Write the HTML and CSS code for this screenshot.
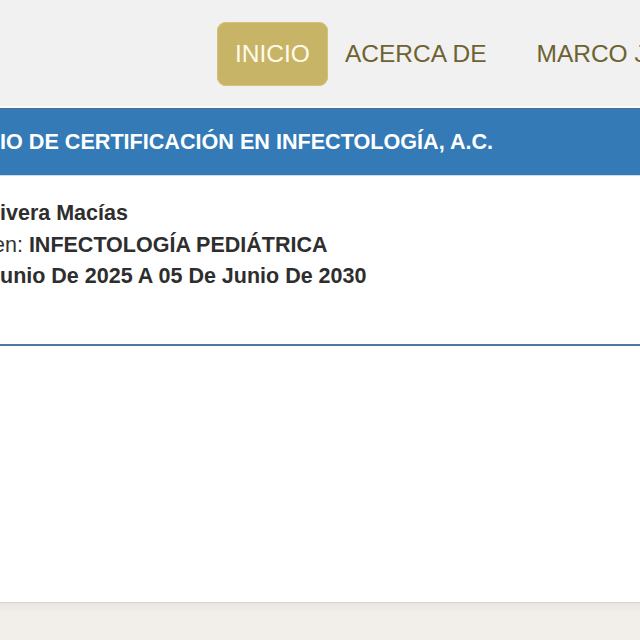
FILE: index.html
```html
<!DOCTYPE html>
<html lang="es">
<head>
<meta charset="utf-8">
<title>Consejo</title>
<link rel="stylesheet" href="styles.css">
</head>
<body>
<header class="topbar">
  <nav class="nav">
    <a class="nav-item active" href="#">INICIO</a>
    <a class="nav-item" href="#">ACERCA DE</a>
    <a class="nav-item next" href="#">MARCO J</a>
  </nav>
</header>
<main class="main">
  <section class="panel">
    <div class="panel-heading">IO DE CERTIFICACIÓN EN INFECTOLOGÍA, A.C.</div>
    <div class="panel-body">
      <p class="line"><strong>ivera Macías</strong></p>
      <p class="line shifted">en: <strong>INFECTOLOGÍA PEDIÁTRICA</strong></p>
      <p class="line"><strong>unio De 2025 A 05 De Junio De 2030</strong></p>
    </div>
  </section>
</main>
<footer class="footer"></footer>
</body>
</html>
```

FILE: styles.css
```css
html, body {
  margin: 0;
  padding: 0;
}
body {
  background: #ffffff;
  font-family: "Liberation Sans", Arial, Helvetica, sans-serif;
  color: #333333;
  overflow: hidden;
}
.topbar {
  background: #f1f1f1;
  height: 106px;
  border-bottom: 2px solid #fbfbfb;
}
.nav {
  display: flex;
  align-items: center;
  padding-left: 217px;
  height: 106px;
  white-space: nowrap;
  overflow: hidden;
}
.nav-item {
  display: flex;
  align-items: center;
  height: 64px;
  padding: 0 17px;
  font-size: 24.5px;
  color: #6e6230;
  text-decoration: none;
  margin-top: 2px;
}
.nav-item.active {
  background: #c8b466;
  color: #fffbea;
  border-radius: 9px;
  box-shadow: inset 0 0 0 1px #d3c27a;
  padding: 0 18px;
}
.nav-item.next {
  margin-left: 16px;
}
.main {
  height: 494px;
  background: #ffffff;
}
.panel {
  border-top: 1px solid #4c6d8e;
  border-bottom: 2px solid #52779c;
}
.panel-heading {
  background: #337ab7;
  height: 66px;
  display: flex;
  align-items: center;
  color: #ffffff;
  font-weight: bold;
  font-size: 21.6px;
  white-space: nowrap;
  border-bottom: 1px solid #c9dcec;
}
.panel-body {
  padding: 22px 0 51px 0;
  background: #ffffff;
}
.line {
  margin: 0;
  font-size: 21.5px;
  line-height: 31.5px;
  white-space: nowrap;
  color: #333333;
}
.line.shifted {
  text-indent: -7px;
}
.line strong {
  color: #2e2e2e;
}
.footer {
  height: 38px;
  border-top: 1px solid #d7d3cd;
  background: linear-gradient(#e9e6e1, #f2efea 10px, #f2efea);
}
```
